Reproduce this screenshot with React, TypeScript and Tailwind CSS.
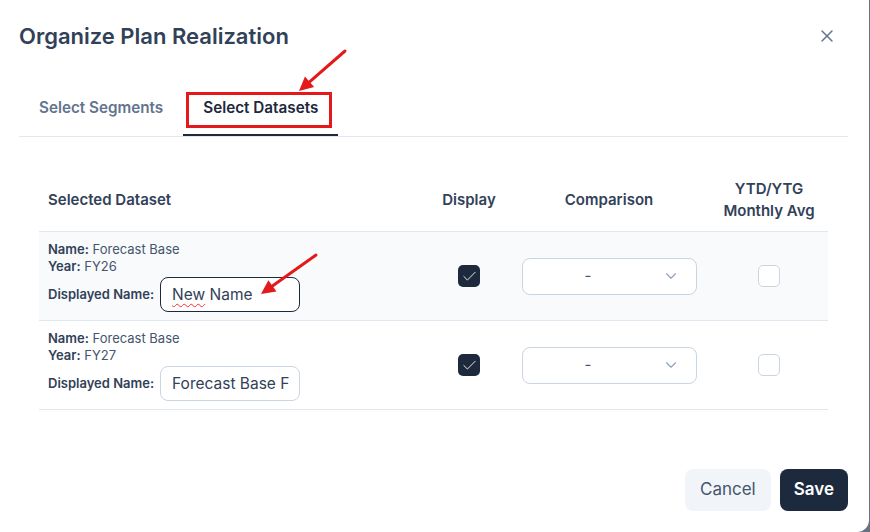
import React from 'react';
import { X, ChevronDown, Check } from 'lucide-react';

const rows = [
  { year: 'FY26', value: 'New Name', focused: true },
  { year: 'FY27', value: 'Forecast Base F', focused: false },
];

const Arrow = ({ x1, y1, x2, y2 }: { x1: number; y1: number; x2: number; y2: number }) => {
  const angle = Math.atan2(y2 - y1, x2 - x1);
  const len = 14;
  const w = 7;
  const bx = x2 - len * Math.cos(angle);
  const by = y2 - len * Math.sin(angle);
  const px = -Math.sin(angle) * w;
  const py = Math.cos(angle) * w;
  return (
    <g>
      <line x1={x1} y1={y1} x2={bx} y2={by} stroke="#e3191b" strokeWidth={3} strokeLinecap="round" />
      <polygon points={`${x2},${y2} ${bx + px},${by + py} ${bx - px},${by - py}`} fill="#e3191b" />
    </g>
  );
};

export default function App() {
  return (
    <div className="w-[870px] h-[532px] bg-gray-500 overflow-hidden" style={{ fontFamily: 'Inter, "Noto Sans", sans-serif' }}>
      <div className="relative w-[869px] h-[532px] bg-white rounded-br-[12px] flex flex-col">
        <div className="flex items-center justify-between pl-[19px] pr-[32px] pt-[21px]">
          <h1 className="text-[22px] font-semibold text-slate-700 leading-[30px]">Organize Plan Realization</h1>
          <X className="w-[20px] h-[20px] text-slate-500" strokeWidth={1.75} />
        </div>

        <div className="mx-[19px] mt-[37px] w-[829px] border-b border-slate-200 flex pl-[2px]">
          <div className="px-[18px] h-[48px] pt-[10px] text-[15.25px] leading-[20px] font-semibold text-slate-500">Select Segments</div>
          <div className="ml-[2px] px-[20px] h-[48px] pt-[10px] text-[15.25px] leading-[20px] font-semibold text-slate-800 border-b-2 border-slate-800 -mb-px">
            Select Datasets
          </div>
        </div>

        <div className="ml-[39px] mt-[32px] w-[789px] text-slate-700">
          <div className="grid grid-cols-[391px_78px_202px_118px] h-[63px] items-center border-b border-slate-200 text-[15px] font-semibold">
            <div className="pl-[9px]">Selected Dataset</div>
            <div className="text-center">Display</div>
            <div className="text-center">Comparison</div>
            <div className="text-center leading-[22px]">YTD/YTG<br />Monthly Avg</div>
          </div>
          {rows.map((r, i) => (
            <div
              key={r.year}
              className={`grid grid-cols-[391px_78px_202px_118px] h-[89px] items-center border-b border-slate-200 ${i === 0 ? 'bg-slate-50' : 'bg-white'}`}
            >
              <div className="pl-[9px] text-[13px] leading-[17px] text-slate-600">
                <div><span className="font-semibold text-slate-700">Name:</span> Forecast Base</div>
                <div><span className="font-semibold text-slate-700">Year:</span> {r.year}</div>
                <div className="flex items-center mt-[2px]">
                  <span className="font-semibold text-slate-700 mr-[6px]">Displayed Name:</span>
                  <div
                    className={`w-[140px] h-[35px] rounded-lg flex items-center px-[11px] bg-white text-[15.5px] text-slate-700 overflow-hidden whitespace-nowrap border ${r.focused ? 'border-slate-800' : 'border-slate-300'}`}
                  >
                    {r.focused ? (
                      <span>
                        <span className="underline decoration-wavy decoration-red-500 underline-offset-[3px] decoration-1">New</span> Name
                      </span>
                    ) : (
                      r.value
                    )}
                  </div>
                </div>
              </div>
              <div className="flex justify-center">
                <div className="w-[22px] h-[22px] rounded-[5px] bg-slate-800 flex items-center justify-center">
                  <Check className="w-[17px] h-[17px] text-white" strokeWidth={1.25} />
                </div>
              </div>
              <div className="flex justify-center">
                <div className="w-[175px] h-[37px] rounded-lg border border-slate-300 bg-white flex items-center justify-between pl-[62px] pr-[16px] text-slate-600">
                  <span className="text-[15px]">-</span>
                  <ChevronDown className="w-[18px] h-[18px] text-slate-400" strokeWidth={1.5} />
                </div>
              </div>
              <div className="flex justify-center">
                <div className="w-[22px] h-[22px] rounded-[5px] border border-slate-300 bg-white" />
              </div>
            </div>
          ))}
        </div>

        <div className="mt-auto mb-[21px] mr-[21px] flex justify-end gap-[9px]">
          <button className="h-[42px] px-[15px] rounded-lg bg-slate-100 text-slate-600 text-[17px]">Cancel</button>
          <button className="h-[42px] px-[14px] rounded-lg bg-slate-800 text-white text-[17px] font-semibold">Save</button>
        </div>

        <div className="absolute left-[186px] top-[92px] w-[146px] h-[36px] border-[3px] border-[#e3191b] pointer-events-none" />
        <svg className="absolute left-0 top-0 pointer-events-none" width="870" height="532">
          <Arrow x1={345} y1={51} x2={299} y2={91} />
          <Arrow x1={316} y1={255} x2={261} y2={294} />
        </svg>
      </div>
    </div>
  );
}
